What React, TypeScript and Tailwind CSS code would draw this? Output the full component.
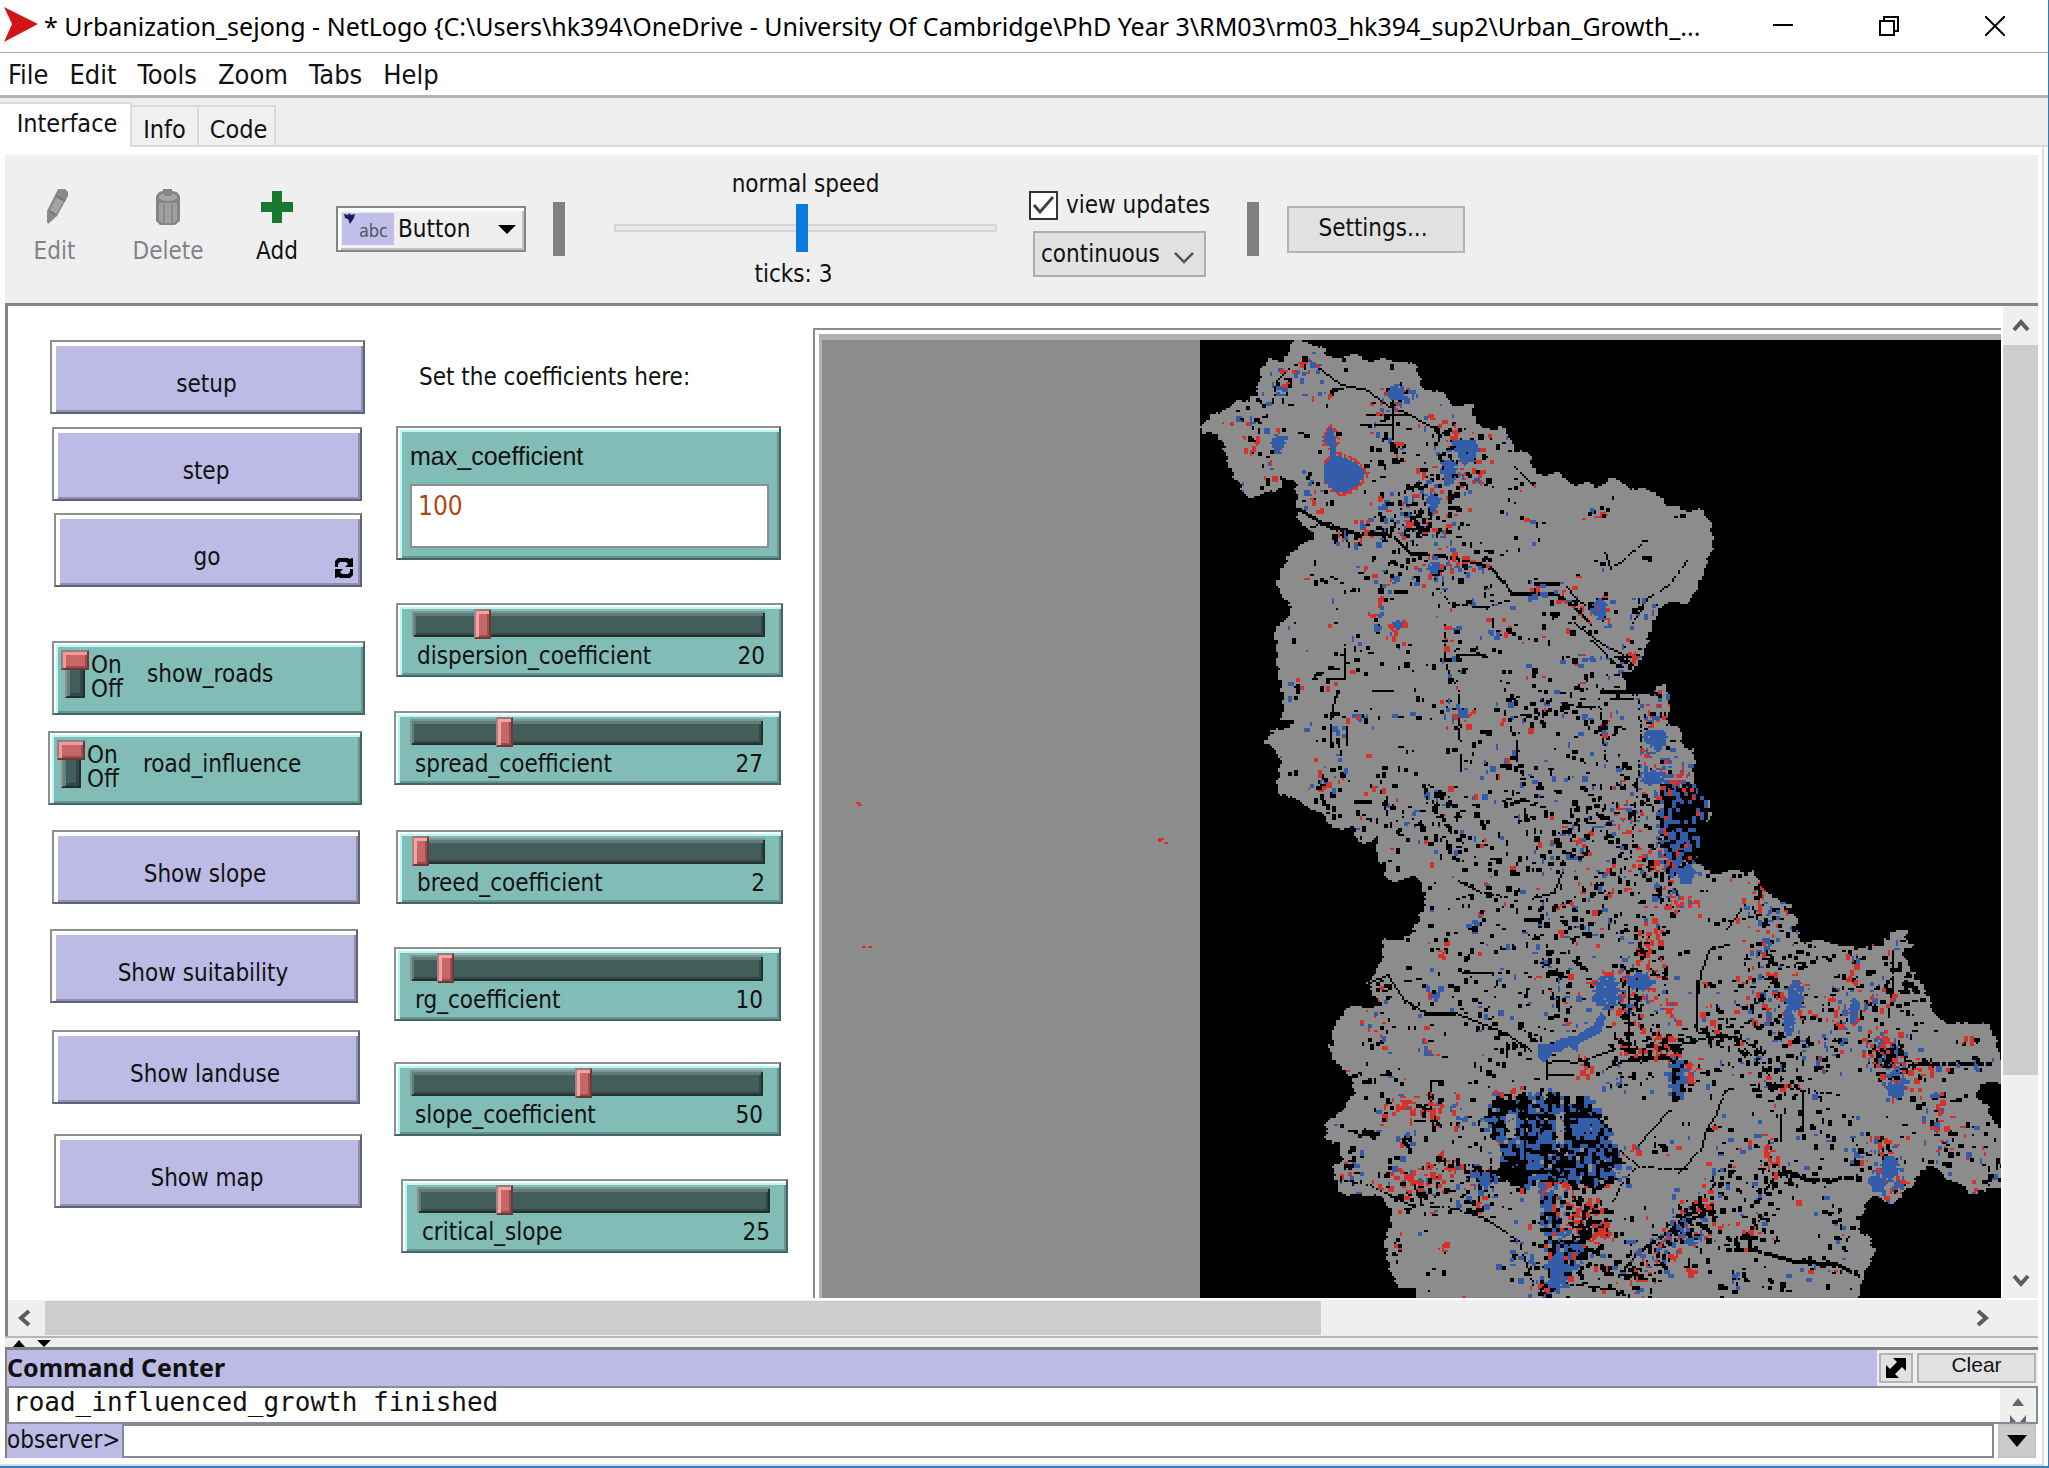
import React from "react";

/* ------------------------------------------------------------------ */
/* World view: a patch raster built from outlines, roads and clusters  */
/* ------------------------------------------------------------------ */

const CELL = 2;
const ORIGIN_X = 822;
const ORIGIN_Y = 341;
const COLS = 590;
const ROWS = 480;

const BLACK = 1;
const GRAY = 0;
const BLUE = 2;
const RED = 3;

type Point = [number, number];

const OUTLINE: Point[] = [
  [1200, 430], [1213, 417], [1236, 404], [1249, 402], [1257, 385], [1261, 370], [1272, 361], [1286, 361],
  [1294, 343], [1311, 343], [1325, 350], [1326, 359], [1358, 357], [1376, 361], [1404, 362], [1417, 368],
  [1419, 387], [1449, 398], [1452, 405], [1474, 406], [1475, 422], [1494, 433], [1502, 428], [1513, 445],
  [1531, 458], [1536, 474], [1560, 475], [1572, 485], [1597, 485], [1613, 480], [1635, 490], [1654, 493],
  [1670, 508], [1701, 512], [1712, 523], [1711, 543], [1706, 575], [1694, 593], [1685, 603], [1660, 606],
  [1654, 625], [1645, 650], [1635, 670], [1624, 672], [1627, 687], [1635, 697], [1656, 695], [1658, 685],
  [1668, 685], [1667, 727], [1683, 730], [1683, 747], [1693, 750], [1693, 777], [1711, 808], [1707, 827],
  [1702, 850], [1694, 863], [1705, 873], [1752, 872], [1760, 888], [1787, 903], [1796, 917], [1797, 937],
  [1807, 943], [1834, 942], [1842, 948], [1884, 947], [1887, 932], [1909, 932], [1904, 940], [1914, 947],
  [1904, 953], [1906, 963], [1919, 980], [1931, 1000], [1934, 1018], [1956, 1025], [1984, 1023], [1994, 1040],
  [2003, 1060], [2003, 1083], [1981, 1085], [1974, 1093], [1989, 1108], [1994, 1127], [2003, 1128], [2003, 1188],
  [1969, 1195], [1951, 1180], [1934, 1168], [1921, 1170], [1911, 1187], [1892, 1204], [1869, 1198], [1866, 1205],
  [1859, 1230], [1868, 1237], [1874, 1257], [1864, 1277], [1859, 1292], [1858, 1310], [1417, 1310], [1414, 1292],
  [1402, 1290], [1392, 1273], [1382, 1243], [1392, 1227], [1392, 1210], [1382, 1203], [1374, 1195], [1347, 1198],
  [1335, 1187], [1335, 1167], [1344, 1160], [1340, 1148], [1324, 1140], [1327, 1123], [1344, 1110], [1354, 1095],
  [1347, 1073], [1330, 1053], [1332, 1027], [1347, 1009], [1382, 1007], [1374, 993], [1367, 983], [1384, 960],
  [1384, 942], [1409, 938], [1419, 917], [1427, 900], [1424, 887], [1414, 878], [1387, 882], [1377, 860],
  [1379, 838], [1359, 845], [1354, 830], [1330, 827], [1315, 810], [1300, 804], [1279, 792], [1279, 757],
  [1266, 745], [1276, 730], [1292, 728], [1292, 722], [1281, 718], [1283, 683], [1275, 660], [1276, 630],
  [1292, 613], [1277, 587], [1281, 573], [1288, 557], [1311, 538], [1315, 532], [1301, 525], [1297, 507],
  [1294, 485], [1283, 475], [1276, 493], [1244, 498], [1236, 482], [1222, 442], [1215, 436], [1200, 435],
];

const LAKE: Point[] = [
  [1328, 428], [1333, 430], [1336, 455], [1354, 462], [1365, 473], [1358, 484], [1344, 493], [1333, 491],
  [1323, 480], [1323, 465], [1329, 458], [1328, 445], [1322, 441],
];

const RIVER: Point[] = [
  [1536, 1044], [1552, 1044], [1560, 1038], [1575, 1036], [1584, 1030], [1592, 1026], [1600, 1012], [1605, 1018],
  [1600, 1032], [1590, 1038], [1578, 1044], [1576, 1052], [1568, 1046], [1560, 1052], [1552, 1053], [1543, 1064],
  [1538, 1058],
];

const ROADS: { pts: Point[]; w: number; gap: number }[] = [
  { pts: [[1297, 508], [1325, 525], [1340, 528], [1360, 534], [1390, 532], [1410, 552], [1440, 555], [1470, 560], [1490, 567], [1502, 580], [1510, 591]], w: 2, gap: 0.15 },
  { pts: [[1510, 593], [1555, 593], [1575, 608], [1590, 622]], w: 2, gap: 0 },
  { pts: [[1533, 582], [1555, 583]], w: 2, gap: 0 },
  { pts: [[1560, 580], [1580, 602], [1602, 620]], w: 1, gap: 0.1 },
  { pts: [[1573, 622], [1600, 643], [1622, 655], [1635, 668]], w: 1, gap: 0 },
  { pts: [[1590, 640], [1605, 655], [1620, 667]], w: 1, gap: 0.1 },
  { pts: [[1315, 365], [1340, 385], [1365, 390], [1385, 405], [1410, 415], [1425, 425], [1437, 428], [1437, 440]], w: 1, gap: 0 },
  { pts: [[1392, 400], [1392, 438]], w: 1, gap: 0 },
  { pts: [[1366, 415], [1405, 415]], w: 1, gap: 0 },
  { pts: [[1360, 424], [1390, 424]], w: 1, gap: 0.1 },
  { pts: [[1272, 402], [1276, 380], [1290, 366]], w: 1, gap: 0.1 },
  { pts: [[1300, 530], [1330, 522], [1345, 540]], w: 1, gap: 0.2 },
  { pts: [[1436, 588], [1448, 603], [1485, 608], [1508, 600]], w: 1, gap: 0.25 },
  { pts: [[1443, 625], [1445, 665], [1457, 690], [1459, 740]], w: 1, gap: 0.1 },
  { pts: [[1459, 755], [1459, 770]], w: 1, gap: 0 },
  { pts: [[1458, 655], [1486, 656]], w: 1, gap: 0 },
  { pts: [[1439, 659], [1452, 659]], w: 2, gap: 0 },
  { pts: [[1688, 560], [1668, 585], [1645, 600], [1632, 622]], w: 1, gap: 0.2 },
  { pts: [[1640, 545], [1620, 562], [1610, 568], [1604, 550]], w: 1, gap: 0.25 },
  { pts: [[1513, 465], [1530, 482]], w: 1, gap: 0.1 },
  { pts: [[1371, 690], [1391, 690]], w: 1, gap: 0 },
  { pts: [[1343, 645], [1343, 678], [1328, 680]], w: 1, gap: 0.1 },
  { pts: [[1337, 690], [1330, 715], [1330, 738]], w: 2, gap: 0.25 },
  { pts: [[1345, 727], [1345, 745]], w: 1, gap: 0 },
  { pts: [[1565, 705], [1600, 708], [1602, 735], [1605, 760]], w: 1, gap: 0.1 },
  { pts: [[1516, 740], [1516, 760]], w: 1, gap: 0 },
  { pts: [[1353, 801], [1370, 801]], w: 2, gap: 0 },
  { pts: [[1600, 690], [1632, 692]], w: 2, gap: 0 },
  { pts: [[1610, 699], [1632, 699]], w: 1, gap: 0 },
  { pts: [[1638, 700], [1640, 740], [1636, 790], [1630, 860]], w: 1, gap: 0.4 },
  { pts: [[1367, 983], [1387, 975], [1404, 1000], [1424, 1013], [1454, 1013], [1484, 1025], [1504, 1033], [1529, 1050]], w: 1, gap: 0 },
  { pts: [[1424, 1012], [1454, 1013]], w: 2, gap: 0 },
  { pts: [[1462, 972], [1490, 972]], w: 1, gap: 0 },
  { pts: [[1678, 1045], [1708, 1037], [1738, 1038], [1757, 1050]], w: 1, gap: 0 },
  { pts: [[1710, 948], [1700, 973], [1696, 1000], [1696, 1030]], w: 1, gap: 0 },
  { pts: [[1740, 910], [1726, 928]], w: 1, gap: 0 },
  { pts: [[1670, 1110], [1648, 1133], [1635, 1148]], w: 1, gap: 0 },
  { pts: [[1725, 1090], [1715, 1115], [1705, 1130], [1700, 1150], [1678, 1173]], w: 1, gap: 0.1 },
  { pts: [[1725, 1248], [1757, 1250], [1792, 1260], [1837, 1264], [1857, 1274]], w: 2, gap: 0.05 },
  { pts: [[1912, 1063], [1989, 1063]], w: 2, gap: 0.1 },
  { pts: [[1464, 1171], [1504, 1173], [1540, 1178], [1580, 1172]], w: 2, gap: 0 },
  { pts: [[1618, 1150], [1638, 1167], [1688, 1170]], w: 1, gap: 0.3 },
  { pts: [[1636, 1167], [1620, 1185], [1612, 1200]], w: 1, gap: 0.4 },
  { pts: [[1618, 1275], [1640, 1250], [1675, 1225], [1700, 1200], [1715, 1180]], w: 2, gap: 0.2 },
  { pts: [[1484, 1218], [1519, 1243], [1533, 1287]], w: 1, gap: 0.1 },
  { pts: [[1757, 1200], [1770, 1180], [1787, 1170], [1807, 1180], [1852, 1177]], w: 2, gap: 0.15 },
  { pts: [[1892, 950], [1892, 987], [1887, 1017]], w: 1, gap: 0.1 },
  { pts: [[1456, 880], [1480, 892], [1508, 898]], w: 1, gap: 0.3 },
  { pts: [[1531, 898], [1553, 893], [1562, 872]], w: 1, gap: 0 },
  { pts: [[1546, 1064], [1556, 1060], [1575, 1063], [1600, 1054], [1612, 1050]], w: 1, gap: 0.1 },
  { pts: [[1606, 1068], [1625, 1060], [1640, 1062], [1665, 1054], [1676, 1075]], w: 1, gap: 0.1 },
  { pts: [[1545, 1060], [1545, 1078]], w: 1, gap: 0 },
  { pts: [[1545, 1074], [1572, 1074]], w: 1, gap: 0.05 },
  { pts: [[1628, 1058], [1676, 1057]], w: 2, gap: 0 },
  { pts: [[1628, 985], [1628, 1045]], w: 1, gap: 0 },
  { pts: [[1696, 980], [1696, 1002]], w: 1, gap: 0 },
  { pts: [[1802, 1093], [1802, 1130]], w: 1, gap: 0 },
  { pts: [[1780, 1115], [1780, 1140]], w: 1, gap: 0 },
  { pts: [[1735, 1040], [1755, 1060], [1775, 1085], [1800, 1090], [1840, 1095]], w: 1, gap: 0.3 },
  { pts: [[1430, 1080], [1430, 1110]], w: 1, gap: 0 },
  { pts: [[1340, 1180], [1370, 1185], [1410, 1205], [1450, 1208], [1484, 1218]], w: 1, gap: 0.25 },
  { pts: [[1616, 1290], [1560, 1283], [1580, 1270]], w: 1, gap: 0.2 },
];

/* x, y, rx, ry, number of marks, colour mix */
type Cluster = [number, number, number, number, number, string];

const CLUSTERS: Cluster[] = [
  [1298, 370, 22, 14, 22, "kkbbr"], [1312, 362, 12, 10, 12, "rrbk"], [1284, 390, 12, 20, 20, "kbr"],
  [1262, 400, 12, 16, 14, "kkb"], [1240, 418, 20, 10, 18, "bbrk"], [1250, 443, 10, 8, 16, "rrk"],
  [1268, 465, 10, 16, 14, "krb"], [1275, 440, 10, 12, 14, "bbbr"], [1320, 395, 16, 12, 12, "krb"],
  [1385, 402, 18, 12, 34, "rrkb"], [1398, 395, 16, 12, 34, "bbbk"], [1380, 430, 26, 18, 18, "kkb"],
  [1394, 450, 8, 14, 16, "rrbk"], [1430, 420, 20, 14, 16, "kbr"], [1455, 430, 12, 12, 12, "rrk"],
  [1455, 460, 24, 24, 70, "kkkbbr"], [1480, 450, 14, 20, 14, "kr"], [1462, 480, 26, 14, 28, "krb"],
  [1425, 480, 16, 16, 22, "kkr"], [1428, 505, 26, 22, 70, "kkrbb"], [1400, 520, 30, 20, 44, "kkkkb"],
  [1422, 532, 22, 14, 60, "kkkkbr"], [1384, 500, 12, 12, 16, "rkb"], [1318, 500, 16, 12, 18, "rbk"],
  [1345, 535, 36, 12, 30, "kkbr"], [1360, 525, 8, 8, 10, "rrb"], [1455, 560, 34, 14, 44, "kkrrb"],
  [1430, 575, 18, 16, 28, "bbrk"], [1380, 575, 30, 14, 26, "kkbr"], [1460, 590, 26, 24, 20, "kkb"],
  [1378, 610, 12, 32, 24, "kkbr"], [1398, 628, 12, 12, 16, "rrb"], [1360, 650, 12, 24, 14, "kkb"],
  [1532, 590, 16, 14, 20, "rkb"], [1562, 592, 14, 18, 24, "rrkb"], [1600, 607, 16, 20, 34, "brk"],
  [1572, 615, 24, 14, 28, "kkr"], [1640, 605, 14, 12, 12, "kb"], [1633, 650, 8, 14, 16, "rrk"],
  [1620, 660, 22, 14, 30, "kkb"], [1575, 660, 24, 6, 18, "brk"], [1595, 516, 12, 10, 12, "rrbk"],
  [1500, 628, 12, 22, 12, "kbr"], [1448, 635, 10, 24, 22, "bkr"], [1455, 670, 8, 20, 18, "krb"],
  [1455, 712, 22, 14, 30, "brk"], [1315, 682, 18, 10, 18, "kkr"], [1335, 745, 14, 40, 20, "kb"],
  [1360, 715, 20, 12, 16, "kbr"], [1322, 782, 14, 12, 28, "rrkb"], [1430, 795, 16, 20, 30, "rkkb"],
  [1380, 790, 20, 14, 16, "kkbr"], [1530, 715, 34, 14, 28, "kkbr"], [1570, 710, 20, 12, 20, "kkb"],
  [1605, 725, 14, 14, 20, "rkb"], [1540, 780, 70, 34, 60, "kkkb"], [1662, 700, 10, 20, 16, "krb"],
  [1648, 715, 12, 22, 28, "rrbbk"], [1652, 745, 16, 16, 40, "rrbbb"], [1660, 775, 22, 20, 60, "rbbk"],
  [1682, 778, 14, 16, 36, "rrrkb"], [1625, 795, 28, 34, 50, "kkbr"],
  [1672, 850, 20, 26, 50, "bbkkr"], [1650, 862, 20, 16, 44, "rrrkb"], [1662, 892, 20, 16, 50, "rkkb"],
  [1684, 902, 14, 8, 20, "rrb"], [1440, 820, 46, 26, 50, "kkkkb"], [1520, 850, 110, 60, 100, "kkkkbr"],
  [1590, 870, 60, 60, 120, "kkkrb"], [1590, 830, 50, 30, 50, "kkrb"], [1600, 930, 60, 40, 80, "kkkrb"],
  [1475, 920, 10, 14, 18, "kbr"], [1443, 950, 5, 12, 12, "rrk"], [1550, 950, 30, 40, 40, "kkkb"],
  [1648, 945, 14, 34, 60, "rrkk"], [1620, 975, 50, 16, 60, "rrkkb"], [1625, 990, 22, 24, 50, "rrkb"],
  [1640, 990, 20, 20, 40, "rbb"], [1625, 1012, 16, 16, 60, "kkkr"], [1668, 1010, 12, 14, 20, "rrb"],
  [1560, 1000, 44, 40, 50, "kkrb"], [1490, 1010, 40, 30, 30, "kkb"], [1428, 992, 10, 10, 18, "rbk"],
  [1382, 990, 8, 12, 14, "rk"], [1374, 1028, 14, 24, 28, "krb"], [1424, 1052, 10, 10, 14, "bbr"],
  [1658, 1045, 20, 14, 100, "rrrkkk"], [1625, 1045, 16, 14, 50, "kkkkr"],
  [1691, 1070, 6, 12, 22, "rr"], [1614, 1080, 16, 12, 24, "kkkb"], [1586, 1068, 10, 12, 20, "krr"],
  [1770, 910, 28, 30, 50, "kkbr"], [1758, 895, 6, 18, 20, "rrk"], [1765, 950, 18, 34, 60, "rkkb"],
  [1790, 925, 18, 16, 20, "kb"], [1780, 1000, 34, 34, 100, "rrkkb"], [1795, 990, 14, 16, 30, "rb"],
  [1740, 1000, 50, 40, 40, "kkrb"], [1720, 1030, 30, 22, 50, "kkkr"], [1775, 1050, 44, 34, 90, "kkkkkb"],
  [1775, 1085, 24, 16, 60, "kkkr"], [1830, 1040, 30, 30, 50, "kkrb"], [1852, 975, 8, 34, 34, "rbk"],
  [1852, 1015, 12, 18, 28, "bbr"], [1832, 1000, 10, 20, 20, "rk"], [1875, 995, 18, 20, 26, "rrbk"],
  [1900, 970, 20, 34, 40, "kkkbr"], [1880, 1045, 18, 16, 80, "rrkkb"], [1890, 1063, 16, 16, 130, "kkkkrb"],
  [1895, 1085, 16, 14, 40, "rrbb"], [1930, 1070, 26, 10, 28, "rbk"], [1970, 1040, 10, 8, 10, "rk"],
  [1975, 1060, 22, 12, 14, "bk"], [1930, 1105, 12, 20, 20, "rbk"], [1935, 1135, 12, 24, 26, "brk"],
  [1970, 1150, 30, 34, 30, "kkbr"], [1990, 1180, 16, 8, 14, "kb"], [1880, 1145, 14, 12, 20, "rrk"],
  [1860, 1160, 14, 20, 30, "rkb"], [1888, 1170, 18, 26, 70, "bbbrk"], [1895, 1190, 12, 12, 24, "rrb"],
  [1768, 1160, 12, 18, 34, "rrk"], [1750, 1140, 20, 16, 16, "rbk"], [1790, 1180, 40, 16, 40, "kkk"],
  [1760, 1210, 20, 40, 50, "kkkb"], [1722, 1180, 26, 24, 34, "kkrb"], [1840, 1230, 24, 40, 34, "kkkb"],
  [1830, 1130, 50, 34, 24, "kkkb"],
  [1395, 1110, 22, 16, 50, "rrrkb"], [1431, 1112, 10, 24, 40, "rrrk"], [1455, 1115, 10, 24, 18, "bbr"],
  [1366, 1133, 16, 5, 20, "kkk"], [1402, 1140, 12, 16, 18, "krb"], [1412, 1178, 30, 14, 84, "rrrrkb"],
  [1445, 1162, 12, 12, 30, "rrrk"], [1470, 1170, 26, 16, 44, "kkrb"], [1430, 1195, 50, 18, 84, "kkkkbr"],
  [1350, 1165, 12, 22, 30, "kkbr"], [1470, 1200, 18, 12, 28, "rbk"], [1484, 1180, 10, 10, 30, "bbb"],
  [1508, 1172, 18, 10, 70, "kkkk"], [1612, 1165, 14, 20, 50, "kkbb"], [1508, 1094, 14, 6, 14, "rkr"],
  [1545, 1187, 24, 8, 40, "rrbbk"], [1590, 1205, 18, 26, 60, "kkkbr"], [1575, 1205, 20, 14, 50, "kkrr"],
  [1582, 1228, 18, 20, 60, "kkkr"], [1597, 1232, 14, 14, 60, "rrrk"],
  [1578, 1245, 18, 18, 60, "bbkk"], [1542, 1290, 12, 12, 30, "rkb"],
  [1600, 1270, 30, 22, 34, "kkk"], [1690, 1215, 26, 22, 90, "bbkkkr"], [1705, 1210, 14, 14, 24, "rrk"],
  [1680, 1235, 26, 16, 80, "bbkkr"], [1655, 1255, 26, 18, 74, "bbkkr"], [1635, 1278, 22, 18, 60, "kkkbr"],
  [1745, 1235, 28, 14, 50, "rkk"], [1692, 1262, 12, 10, 14, "rk"], [1732, 1278, 10, 8, 14, "kb"],
  [1443, 1247, 5, 8, 10, "rrk"], [1396, 1245, 5, 20, 14, "krk"], [1515, 1255, 20, 34, 22, "kb"],
  [1650, 1145, 40, 12, 24, "rbk"], [1640, 1085, 20, 12, 12, "kb"], [1790, 1275, 70, 22, 28, "kkkb"],
];

/* x, y, width, height, marks: even background noise */
const NOISE: [number, number, number, number, number][] = [
  [1210, 345, 260, 200, 60], [1360, 430, 180, 130, 80], [1480, 480, 230, 180, 40], [1280, 560, 240, 240, 90],
  [1480, 660, 190, 150, 90], [1320, 800, 380, 130, 190], [1400, 920, 280, 120, 100], [1330, 1020, 220, 180, 100],
  [1700, 870, 220, 200, 200], [1680, 1060, 300, 130, 80], [1390, 1200, 470, 100, 70], [1900, 1020, 100, 180, 34],
];

/* Built-up districts: outline and colour mix, drawn block by block */
const DISTRICTS: { shape: Point[]; mix: string }[] = [
  {
    shape: [
      [1486, 1110], [1498, 1092], [1512, 1098], [1530, 1090], [1560, 1093], [1562, 1112], [1570, 1098], [1588, 1094],
      [1592, 1110], [1604, 1114], [1608, 1138], [1618, 1150], [1612, 1170], [1600, 1188], [1575, 1184], [1555, 1182],
      [1520, 1184], [1502, 1168], [1498, 1140], [1484, 1124],
    ],
    mix: "bbbbbbbbbbkkkkkkkkkg",
  },
  {
    shape: [[1486, 1105], [1498, 1094], [1510, 1100], [1508, 1116], [1490, 1118]],
    mix: "kkkkb",
  },
  {
    shape: [
      [1656, 786], [1668, 780], [1696, 782], [1710, 806], [1706, 832], [1696, 862], [1672, 868], [1662, 846], [1658, 815],
    ],
    mix: "kkkkkkkkkkbbbbr",
  },
  { shape: [[1658, 815], [1672, 820], [1682, 870], [1668, 872], [1660, 846]], mix: "bbbbkkr" },
  { shape: [[1668, 1052], [1684, 1060], [1688, 1075], [1684, 1100], [1668, 1098], [1666, 1070]], mix: "bbbkkk" },
  {
    shape: [[1536, 1190], [1560, 1196], [1562, 1240], [1584, 1245], [1572, 1268], [1560, 1290], [1544, 1292], [1542, 1240]],
    mix: "bbbbbkkkkrg",
  },
];

/* x, y, rx, ry solid lots */
const LOTS: [number, number, number, number][] = [
  [1396, 393, 10, 8], [1465, 450, 12, 12], [1447, 470, 9, 9], [1277, 444, 7, 9], [1431, 502, 6, 9], [1432, 566, 7, 6],
  [1599, 607, 7, 11], [1397, 623, 5, 5], [1461, 713, 6, 6], [1653, 738, 12, 9], [1652, 776, 16, 8], [1605, 994, 14, 17],
  [1639, 982, 13, 8], [1793, 996, 8, 16], [1787, 1022, 6, 14], [1853, 1010, 5, 11], [1684, 875, 9, 10],
  [1895, 1090, 9, 8], [1888, 1168, 9, 13], [1876, 1183, 9, 10], [1556, 1272, 8, 20], [1484, 1181, 6, 6],
];

function makeRandom(seed: number) {
  let s = seed;
  return () => {
    s = (s * 1664525 + 1013904223) >>> 0;
    return s / 4294967296;
  };
}

function inside(poly: Point[], x: number, y: number) {
  let hit = false;
  for (let i = 0, j = poly.length - 1; i < poly.length; j = i++) {
    const [xi, yi] = poly[i];
    const [xj, yj] = poly[j];
    if (yi > y !== yj > y && x < ((xj - xi) * (y - yi)) / (yj - yi) + xi) hit = !hit;
  }
  return hit;
}

function buildWorld() {
  const rnd = makeRandom(20394);
  const grid = new Uint8Array(COLS * ROWS);
  const land = new Uint8Array(COLS * ROWS);
  const blackStart = (1200 - ORIGIN_X) / CELL;

  for (let r = 0; r < ROWS; r++) {
    const jx = Math.sin(Math.floor(r / 2) * 1.9) * 1.5 + Math.sin(Math.floor(r / 3) * 0.7) * 1.5;
    for (let c = blackStart; c < COLS; c++) {
      const k = r * COLS + c;
      const jy = Math.sin(Math.floor(c / 3) * 1.3) * 2;
      const x = ORIGIN_X + c * CELL + 1 + jx;
      const y = ORIGIN_Y + r * CELL + 1 + jy;
      if (inside(OUTLINE, x, y)) land[k] = 1;
      else grid[k] = BLACK;
    }
  }

  const put = (c: number, r: number, v: number) => {
    if (c < 0 || r < 0 || c >= COLS || r >= ROWS) return;
    const k = r * COLS + c;
    if (land[k]) grid[k] = v;
  };
  const col = (x: number) => Math.round((x - ORIGIN_X) / CELL);
  const row = (y: number) => Math.round((y - ORIGIN_Y) / CELL);
  const code = (ch: string) => (ch === "k" ? BLACK : ch === "b" ? BLUE : ch === "r" ? RED : GRAY);
  const pick = (mix: string) => code(mix[Math.floor(rnd() * mix.length)]);
  const span = () => {
    const t = rnd();
    return t < 0.3 ? 1 : t < 0.8 ? 2 : 3;
  };

  const mark = (x: number, y: number, v: number) => {
    const c = col(x);
    const r = row(y);
    const w = span();
    const h = span();
    for (let a = 0; a < w; a++) for (let b = 0; b < h; b++) put(c + a, r + b, v);
  };

  for (const [x, y, w, h, n] of NOISE) {
    for (let i = 0; i < n; i++) {
      const t = rnd();
      const px = x + rnd() * w;
      const py = y + rnd() * h;
      mark(px, py, t < 0.72 ? BLACK : t < 0.9 ? BLUE : RED);
      if (rnd() < 0.5) mark(px + 6, py + (rnd() - 0.5) * 8, BLACK);
    }
  }
  for (const road of ROADS) {
    for (let i = 0; i + 1 < road.pts.length; i++) {
      const [x1, y1] = road.pts[i];
      const [x2, y2] = road.pts[i + 1];
      const n = Math.ceil(Math.max(Math.abs(x2 - x1), Math.abs(y2 - y1)) / CELL);
      for (let s = 0; s <= n; s++) {
        if (rnd() < road.gap) continue;
        const c = col(x1 + ((x2 - x1) * s) / n);
        const r = row(y1 + ((y2 - y1) * s) / n);
        for (let a = 0; a < road.w; a++) put(c, r + a, BLACK);
      }
    }
  }
  for (const { shape, mix } of DISTRICTS) {
    for (let y = 780; y < 1296; y += 2 * CELL) {
      for (let x = 1480; x < 1720; x += 2 * CELL) {
        const px = x + (rnd() - 0.5) * 10;
        const py = y + (rnd() - 0.5) * 10;
        if (!inside(shape, px, py)) continue;
        const v = pick(mix);
        const c = col(x);
        const r = row(y);
        const w = rnd() < 0.7 ? 2 : 3;
        const h = rnd() < 0.7 ? 2 : 3;
        for (let a = 0; a < w; a++) for (let b = 0; b < h; b++) put(c + a, r + b, v);
      }
    }
  }
  /* Streets and open blocks of the industrial district */
  for (const [x, y, w, h, v] of [
    [1524, 1094, 2, 68, BLACK], [1518, 1114, 84, 4, BLACK], [1540, 1124, 12, 6, BLACK], [1518, 1096, 10, 20, BLACK],
    [1564, 1096, 6, 44, BLACK], [1575, 1096, 4, 26, BLACK], [1555, 1114, 8, 30, GRAY], [1506, 1114, 10, 24, GRAY],
    [1545, 1094, 14, 10, BLACK], [1500, 1162, 26, 20, BLACK], [1480, 1170, 90, 4, BLACK], [1530, 1150, 44, 3, BLACK],
    [1578, 1118, 20, 18, BLUE], [1538, 1132, 14, 12, BLUE], [1528, 1154, 12, 14, BLUE], [1480, 1119, 18, 3, BLUE],
  ]) {
    for (let dy = 0; dy < h; dy += CELL) {
      for (let dx = 0; dx < w; dx += CELL) if (rnd() < 0.9) put(col(x + dx), row(y + dy), v);
    }
  }
  for (const [x, y, rx, ry, n, mix] of CLUSTERS) {
    const count = Math.round(n * 0.72);
    for (let i = 0; i < count; i++) {
      const dx = rnd() + rnd() - 1;
      const dy = rnd() + rnd() - 1;
      mark(x + dx * rx * 1.25, y + dy * ry * 1.25, pick(mix));
    }
  }
  for (const [x, y, rx, ry] of LOTS) {
    for (let dy = -ry; dy <= ry; dy += CELL) {
      const wob = 0.6 + rnd() * 0.7;
      for (let dx = -rx; dx <= rx; dx += CELL) {
        if ((dx / rx) ** 2 + (dy / ry) ** 2 <= wob && rnd() < 0.96) put(col(x + dx), row(y + dy), BLUE);
      }
    }
  }
  for (const shape of [LAKE, RIVER]) {
    for (let r = 0; r < ROWS; r++) {
      for (let c = blackStart; c < COLS; c++) {
        const x = ORIGIN_X + c * CELL;
        const y = ORIGIN_Y + r * CELL;
        if (inside(shape, x, y)) put(c, r, BLUE);
        else if (shape === LAKE && (inside(shape, x - 4, y) || inside(shape, x, y + 4) || inside(shape, x, y - 4)) && rnd() < 0.6) put(c, r, RED);
      }
    }
  }
  for (const [x, y] of [[855, 803], [858, 805], [1157, 839], [1158, 841], [1159, 839], [1163, 843], [861, 947], [867, 947]]) {
    grid[row(y) * COLS + col(x)] = RED;
    grid[row(y) * COLS + col(x) + 1] = RED;
  }

  const paths = ["", "", "", ""];
  for (let r = 0; r < ROWS; r++) {
    let c = 0;
    while (c < COLS) {
      const v = grid[r * COLS + c];
      let e = c + 1;
      while (e < COLS && grid[r * COLS + e] === v) e++;
      if (v !== GRAY) paths[v] += `M${c} ${r}h${e - c}v1h${c - e}z`;
      c = e;
    }
  }
  return paths;
}

const WORLD = buildWorld();

function WorldView() {
  return (
    <svg
      width={COLS * CELL}
      height={ROWS * CELL}
      viewBox={`0 0 ${COLS} ${ROWS}`}
      shapeRendering="crispEdges"
      className="block max-w-none"
      role="img"
      aria-label="Urban growth world view"
    >
      <rect width={COLS} height={ROWS} fill="#8c8c8c" />
      <path d={WORLD[BLACK]} fill="#000000" />
      <path d={WORLD[BLUE]} fill="#345da9" />
      <path d={WORLD[RED]} fill="#d73229" />
    </svg>
  );
}

/* ------------------------------------------------------------------ */
/* Interface widgets                                                   */
/* ------------------------------------------------------------------ */

const BEVEL_PURPLE =
  "border-2 border-t-[#8f8f8f] border-l-[#8f8f8f] border-r-[#62627c] border-b-[#62627c] bg-[#bcbbe5] shadow-[inset_4px_4px_0_#ffffff,inset_-2px_-2px_0_#8f8fb2]";
const BEVEL_TEAL =
  "border-2 border-t-[#8f8f8f] border-l-[#8f8f8f] border-r-[#456663] border-b-[#456663] bg-[#82bcb6] shadow-[inset_2px_2px_0_#ffffff,inset_4px_4px_0_#b2fbf6,inset_-2px_-2px_0_#649590]";

function ModelButton({ label, place, forever }: { label: string; place: string; forever?: boolean }) {
  return (
    <button className={`absolute flex h-[74px] items-center justify-center pt-3.5 pr-0.5 ${BEVEL_PURPLE} ${place}`}>
      <span>{label}</span>
      {forever && (
        <svg className="absolute right-1.5 bottom-1.5" width="20" height="22" viewBox="0 0 20 22" aria-hidden="true">
          <path d="M1 10V4l3-3h10l1 1 4-1v9h-8l3-3-2-2H6L4 7v3z" fill="#000" />
          <path d="M19 12v6l-3 3H6l-1-1-4 1v-9h8l-3 3 2 2h6l2-2v-3z" fill="#000" />
        </svg>
      )}
    </button>
  );
}

function ModelSwitch({ label, place }: { label: string; place: string }) {
  return (
    <label className={`absolute flex h-[74px] items-start ${BEVEL_TEAL} ${place}`}>
      <input type="checkbox" defaultChecked className="sr-only" />
      <span className="mt-[7px] ml-[7px] flex w-7 flex-col items-center">
        <span className="h-5 w-7 border-2 border-t-[#8f7f7f] border-l-[#8f7f7f] border-r-[#6e3838] border-b-[#6e3838] bg-[#c86767] shadow-[inset_3px_3px_0_#f29a9a,inset_-2px_-2px_0_#994f4f]" />
        <span className="h-7 w-5 border-2 border-t-0 border-l-[#8f8f8f] border-r-[#22302e] border-b-[#22302e] bg-[#435d5a] shadow-[inset_3px_0_0_#5d8480,inset_-3px_-3px_0_#33474a]" />
      </span>
      <span className="mt-2.5 ml-0.5 flex w-[56px] flex-col leading-6">
        <span>On</span>
        <span>Off</span>
      </span>
      <span className="mt-[15px]">{label}</span>
    </label>
  );
}

function ModelSlider({ label, value, place }: { label: string; value: number; place: string }) {
  return (
    <label className={`absolute flex h-[74px] w-[387px] flex-col pt-1 pr-4 pl-[14px] ${BEVEL_TEAL} ${place}`}>
      <input
        type="range"
        min={2}
        max={100}
        defaultValue={value}
        className="h-[30px] w-full shrink-0 appearance-none bg-transparent [&::-webkit-slider-runnable-track]:h-[26px] [&::-webkit-slider-runnable-track]:bg-[#435d5a] [&::-webkit-slider-runnable-track]:shadow-[inset_2px_2px_0_#8a8f8e,inset_-2px_-2px_0_#22302e,inset_4px_5px_0_#5a807b,inset_-4px_-4px_0_#344846] [&::-webkit-slider-thumb]:-mt-0.5 [&::-webkit-slider-thumb]:h-[30px] [&::-webkit-slider-thumb]:w-[17px] [&::-webkit-slider-thumb]:appearance-none [&::-webkit-slider-thumb]:border-2 [&::-webkit-slider-thumb]:border-t-[#a07575] [&::-webkit-slider-thumb]:border-l-[#a08585] [&::-webkit-slider-thumb]:border-r-[#6e3838] [&::-webkit-slider-thumb]:border-b-[#6e3838] [&::-webkit-slider-thumb]:bg-[#c86767] [&::-webkit-slider-thumb]:shadow-[inset_3px_3px_0_#f5a2a2,inset_-2px_-2px_0_#994f4f]"
      />
      <span className="flex justify-between pt-[3px] pl-[5px] leading-7">
        <span>{label}</span>
        <span>{value}</span>
      </span>
    </label>
  );
}

function Canvas() {
  return (
    <div className="relative h-full flex-1 overflow-hidden bg-white font-['DejaVu_Sans_Condensed','Noto_Sans',sans-serif] text-[24px] leading-8 text-[#111]">
      <ModelButton label="setup" place="left-[42px] top-[34px] w-[315px]" />
      <ModelButton label="step" place="left-[44px] top-[121px] w-[310px]" />
      <ModelButton label="go" place="left-[46px] top-[207px] w-[308px]" forever />
      <ModelSwitch label="show_roads" place="left-[44px] top-[335px] w-[313px]" />
      <ModelSwitch label="road_influence" place="left-[40px] top-[425px] w-[314px]" />
      <ModelButton label="Show slope" place="left-[44px] top-[524px] w-[308px]" />
      <ModelButton label="Show suitability" place="left-[42px] top-[623px] w-[308px]" />
      <ModelButton label="Show landuse" place="left-[44px] top-[724px] w-[308px]" />
      <ModelButton label="Show map" place="left-[46px] top-[828px] w-[308px]" />

      <p className="absolute left-[411px] top-[55px]">Set the coefficients here:</p>
      <div className={`absolute left-[388px] top-[120px] flex h-[134px] w-[385px] flex-col pt-3 pr-2.5 pb-2 pl-3 ${BEVEL_TEAL}`}>
        <label htmlFor="max" className="font-['Liberation_Sans',sans-serif] text-[25px] leading-8">
          max_coefficient
        </label>
        <textarea
          id="max"
          defaultValue="100"
          className="mt-3 h-16 w-full resize-none border-2 border-[#8d8d98] bg-white px-1.5 py-1 text-[26px] leading-8 text-[#a84a12] outline-none"
        />
      </div>
      <ModelSlider label="dispersion_coefficient" value={20} place="left-[388px] top-[297px]" />
      <ModelSlider label="spread_coefficient" value={27} place="left-[386px] top-[405px]" />
      <ModelSlider label="breed_coefficient" value={2} place="left-[388px] top-[524px]" />
      <ModelSlider label="rg_coefficient" value={10} place="left-[386px] top-[641px]" />
      <ModelSlider label="slope_coefficient" value={50} place="left-[386px] top-[756px]" />
      <ModelSlider label="critical_slope" value={25} place="left-[393px] top-[873px]" />

      <div className="absolute top-[22px] right-0 bottom-0 left-[805px] overflow-hidden border-t-2 border-l-2 border-[#8c8c8c] bg-white pt-1 pl-1">
        <div className="h-full overflow-hidden border-t-[6px] border-l-[3px] border-[#b2b2b2]">
          <WorldView />
        </div>
      </div>
    </div>
  );
}

/* ------------------------------------------------------------------ */
/* Window chrome                                                       */
/* ------------------------------------------------------------------ */

function Chevron({ className }: { className?: string }) {
  return (
    <svg width="18" height="18" viewBox="0 0 18 18" className={className} aria-hidden="true">
      <path d="M2 13 9 5l7 8" fill="none" stroke="#5c5c5c" strokeWidth="4" />
    </svg>
  );
}

function TitleBar() {
  return (
    <header className="flex h-[53px] shrink-0 items-center border-b border-[#a8a8a8] bg-white font-['Noto_Sans',sans-serif] text-[25px] text-black">
      <svg width="38" height="40" viewBox="0 0 38 40" className="ml-0.5 shrink-0" aria-hidden="true">
        <path d="M2 1 36 18 2 36l8-18z" fill="#d31417" />
      </svg>
      <h1 className="ml-1 min-w-0 flex-1 truncate pt-0.5">
        * Urbanization_sejong - NetLogo {"{"}C:\Users\hk394\OneDrive - University Of Cambridge\PhD Year 3\RM03\rm03_hk394_sup2\Urban_Growth_...
      </h1>
      <button aria-label="Minimize" className="flex h-full w-[106px] shrink-0 items-center justify-center">
        <svg width="20" height="20" viewBox="0 0 20 20"><path d="M0 9h20" stroke="#000" strokeWidth="2" /></svg>
      </button>
      <button aria-label="Restore" className="flex h-full w-[106px] shrink-0 items-center justify-center">
        <svg width="20" height="20" viewBox="0 0 20 20" fill="none" stroke="#000" strokeWidth="2">
          <path d="M1 5h14v14H1z" />
          <path d="M5 5V1h14v14h-4" />
        </svg>
      </button>
      <button aria-label="Close" className="flex h-full w-[106px] shrink-0 items-center justify-center">
        <svg width="20" height="20" viewBox="0 0 20 20" stroke="#000" strokeWidth="2"><path d="M0 0l20 20M20 0 0 20" /></svg>
      </button>
    </header>
  );
}

function ToolButton({ label, muted, width, children }: { label: string; muted?: boolean; width: string; children: React.ReactNode }) {
  return (
    <button className={`flex flex-col items-center gap-2 pb-1 ${width} ${muted ? "text-[#82828a]" : "text-[#111]"}`}>
      <svg width="36" height="40" viewBox="0 0 36 40" aria-hidden="true">{children}</svg>
      <span className="leading-8">{label}</span>
    </button>
  );
}

function Toolbar() {
  return (
    <div className="flex h-[148px] shrink-0 items-center bg-[#efefef]">
      <ToolButton label="Edit" muted width="w-[99px]">
        <path d="M21 2h7l3 3v4L20 29l-9 8-1-2V24z" fill="#8a8a8a" />
        <path d="M20 10l7 4-8 13-6-4z" fill="#a3a3a3" />
        <path d="M19 9l9 5M12 24l7 4" stroke="#767676" strokeWidth="2" />
      </ToolButton>
      <ToolButton label="Delete" muted width="w-[128px]">
        <path d="M6 9l3-4 4-1V2h9v2l5 1 3 4v25l-5 4H10l-4-4z" fill="#868686" />
        <path d="M9 16h18v17l-3 3H12l-3-3z" fill="#a0a0a0" />
        <ellipse cx="18" cy="10" rx="9" ry="4" fill="#a4a4a4" />
        <path d="M14 5h8v4h-8z" fill="#868686" />
        <path d="M14 17v19M22 17v19" stroke="#8a8a8a" strokeWidth="2" />
      </ToolButton>
      <ToolButton label="Add" width="w-[90px]">
        <path d="M13 4h10v11h11v10H23v11H13V25H2V15h11z" fill="#177a30" />
      </ToolButton>

      <div className="relative ml-[14px] h-[46px] w-[190px]">
        <select
          aria-label="Widget type"
          className="h-full w-full appearance-none border-2 border-[#858585] bg-[#efefef] pl-[60px] text-[#111] shadow-[inset_3px_3px_0_#ffffff,inset_-2px_-2px_0_#c2c2c2] outline-none"
        >
          <option>Button</option>
        </select>
        <span className="pointer-events-none absolute top-[7px] left-[6px] flex h-8 w-[52px] items-end justify-end bg-[#bfbfea] pr-1.5 text-[18px] leading-7 text-[#55555f]">
          abc
          <svg width="12" height="12" viewBox="0 0 12 12" className="absolute top-0 left-0.5" aria-hidden="true">
            <path d="M0 1l4 1 1-2 2 2 4-1-1 4-4 6-2-5-3-1z" fill="#1c1c5a" />
          </svg>
        </span>
        <svg width="18" height="10" viewBox="0 0 18 10" className="pointer-events-none absolute top-[19px] right-2.5" aria-hidden="true">
          <path d="M0 0h18L9 9z" fill="#000" />
        </svg>
      </div>

      <span className="ml-[27px] h-[54px] w-3 bg-[#808080]" />

      <div className="ml-[49px] flex w-[383px] flex-col items-center">
        <label htmlFor="speed" className="leading-8">normal speed</label>
        <input
          id="speed"
          type="range"
          defaultValue={49}
          className="mt-1 h-12 w-full appearance-none bg-transparent [&::-webkit-slider-runnable-track]:h-2 [&::-webkit-slider-runnable-track]:border-2 [&::-webkit-slider-runnable-track]:border-[#d6d6d6] [&::-webkit-slider-runnable-track]:bg-[#e7eaea] [&::-webkit-slider-thumb]:-mt-[22px] [&::-webkit-slider-thumb]:h-12 [&::-webkit-slider-thumb]:w-3 [&::-webkit-slider-thumb]:appearance-none [&::-webkit-slider-thumb]:bg-[#0a7ade]"
        />
        <span className="mt-1.5 mr-6 leading-8">ticks: 3</span>
      </div>

      <div className="ml-8 flex w-[218px] flex-col pt-2">
        <label className="flex items-center gap-2">
          <input type="checkbox" defaultChecked className="peer sr-only" />
          <span className="flex size-[29px] items-center justify-center border-2 border-[#333] bg-white">
            <svg width="24" height="22" viewBox="0 0 24 22" aria-hidden="true">
              <path d="M2 11l6 7L21 3" fill="none" stroke="#444" strokeWidth="3" />
            </svg>
          </span>
          <span className="whitespace-nowrap leading-8">view updates</span>
        </label>
        <div className="relative mt-2.5 ml-1 h-[46px] w-[173px]">
          <select aria-label="Update mode" className="h-full w-full appearance-none border-2 border-[#acacb2] bg-[#e1e1e1] pl-1.5 text-[#111] outline-none">
            <option>continuous</option>
          </select>
          <svg width="20" height="12" viewBox="0 0 20 12" className="pointer-events-none absolute top-[21px] right-3" aria-hidden="true">
            <path d="M1 1l9 9 9-9" fill="none" stroke="#555" strokeWidth="2.5" />
          </svg>
        </div>
      </div>

      <span className="h-[54px] w-3 bg-[#808080]" />
      <button className="ml-7 h-[47px] w-[178px] border-2 border-[#b4b4b4] bg-[#e1e1e1] pr-1.5 pb-0.5 text-[#111]">Settings...</button>
    </div>
  );
}

function CommandCenter() {
  return (
    <section className="shrink-0 border-t-[3px] border-l-2 border-[#808080]">
      <div className="flex h-9 items-center bg-[#efefef]">
        <h2 className="flex h-full flex-1 items-center bg-[#bcbbe5] font-['Noto_Sans',sans-serif] text-[25px] font-bold text-[#111]">Command Center</h2>
        <button aria-label="Expand" className="ml-0.5 flex h-[30px] w-[34px] items-center justify-center border-2 border-[#b4b4b4] bg-[#e1e1e1]">
          <svg width="22" height="22" viewBox="0 0 22 22" aria-hidden="true">
            <path d="M8 1h13v13l-4-4-7 7 4 4H1V8l4 4 7-7z" fill="#000" />
          </svg>
        </button>
        <button className="mr-0.5 ml-1 flex h-[30px] w-[119px] items-start justify-center border-2 border-[#b4b4b4] bg-[#e1e1e1] font-['Liberation_Sans',sans-serif] text-[21px] leading-5 text-[#111]">
          Clear
        </button>
      </div>
      <div className="flex h-[38px] border-2 border-[#868a98] bg-white">
        <output className="flex-1 pl-1 font-['DejaVu_Sans_Mono',monospace] text-[26px] leading-7 text-[#111]">road_influenced_growth finished</output>
        <div className="flex w-9 flex-col items-center justify-between bg-[#efefef] pt-2.5">
          <svg width="12" height="8" viewBox="0 0 12 8" aria-hidden="true"><path d="M0 8 6 0l6 8z" fill="#666" /></svg>
          <svg width="16" height="7" viewBox="0 0 16 7" aria-hidden="true"><path d="M0 0l6 7H0zM16 0l-6 7h6z" fill="#666" /></svg>
        </div>
      </div>
      <div className="flex h-[34px] items-stretch bg-white">
        <label htmlFor="cmd" className="w-[115px] bg-[#bcbbe5] leading-8 text-[#111]">observer&gt;</label>
        <input id="cmd" type="text" className="min-w-0 flex-1 border-2 border-[#868a98] bg-white px-2 outline-none" />
        <button aria-label="History" className="mr-0.5 ml-1 flex w-[38px] items-center justify-center border-2 border-[#c4c4c4] bg-[#cbcbcb]">
          <svg width="20" height="12" viewBox="0 0 20 12" aria-hidden="true"><path d="M0 0h20L10 12z" fill="#000" /></svg>
        </button>
      </div>
    </section>
  );
}

const MENUS = ["File", "Edit", "Tools", "Zoom", "Tabs", "Help"];

export default function App() {
  return (
    <div className="flex h-screen flex-col border-r border-b-2 border-[#2a7fc4] bg-white font-['DejaVu_Sans_Condensed','Noto_Sans',sans-serif] text-[24px] text-[#111]">
      <TitleBar />
      <nav className="flex h-[45px] shrink-0 items-center gap-[21px] border-b-[3px] border-[#b2b2b2] bg-white px-2 pt-0.5 text-[27px]">
        {MENUS.map((m) => (
          <button key={m}>{m}</button>
        ))}
      </nav>

      <div className="flex h-[49px] shrink-0 items-end bg-[#ededed] text-[25px]" role="tablist">
        <button role="tab" aria-selected="true" className="h-[45px] w-[132px] border-t-2 border-r-2 border-[#dcdcdc] bg-white pb-1 pl-1">Interface</button>
        <div className="flex h-[42px] flex-1 items-start border-b-2 border-[#dadada]">
          <button role="tab" aria-selected="false" className="h-10 w-[67px] border-t-2 border-r-2 border-[#dadada] bg-[#f0f0f0] pt-1">Info</button>
          <button role="tab" aria-selected="false" className="h-10 w-[77px] border-t-2 border-r-2 border-[#dadada] bg-[#f0f0f0] pt-1 pl-1">Code</button>
        </div>
      </div>

      <main className="mr-1 flex min-h-0 flex-1 flex-col border-r-2 border-b-2 border-[#dcdcdc] bg-white pt-2 pr-1 pb-1.5 pl-[5px]">
        <Toolbar />

        <div className="flex min-h-0 flex-1 flex-col border-t-[3px] border-l-[3px] border-[#858585]">
          <div className="flex min-h-0 flex-1">
            <Canvas />
            <div className="ml-0.5 flex w-[35px] flex-col items-center bg-[#efefef]">
              <button aria-label="Scroll up" className="flex h-[39px] w-full shrink-0 items-center justify-center"><Chevron /></button>
              <div className="h-[730px] w-full bg-[#cdcdcd]" />
              <span className="flex-1" />
              <button aria-label="Scroll down" className="flex h-9 w-full shrink-0 items-center justify-center"><Chevron className="rotate-180" /></button>
            </div>
          </div>
          <div className="mt-0.5 flex h-[36px] shrink-0 bg-[#efefef]">
            <button aria-label="Scroll left" className="flex w-[37px] items-center justify-center pr-1"><Chevron className="-rotate-90" /></button>
            <div className="my-px w-[1276px] bg-[#cdcdcd]" />
            <span className="flex-1" />
            <button aria-label="Scroll right" className="mr-[38px] flex w-9 items-center justify-center"><Chevron className="rotate-90" /></button>
          </div>
        </div>

        <div className="flex h-[11px] shrink-0 items-end gap-3 border-t-2 border-[#b8b8b8] bg-[#efefef] pl-2" aria-hidden="true">
          <svg width="12" height="7" viewBox="0 0 12 7"><path d="M0 7 6 0l6 7z" fill="#000" /></svg>
          <svg width="14" height="7" viewBox="0 0 14 7"><path d="M0 0h14L7 7z" fill="#000" /></svg>
        </div>
        <CommandCenter />
      </main>
    </div>
  );
}
